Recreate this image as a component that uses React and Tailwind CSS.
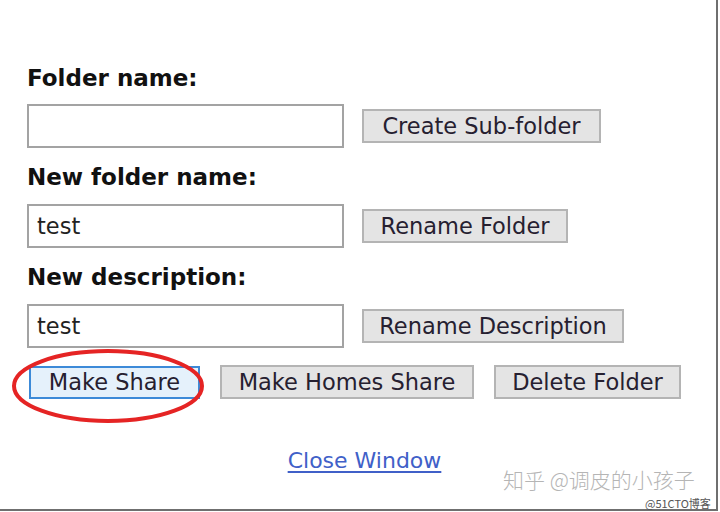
import React from "react";

const font = { fontFamily: '"DejaVu Sans", Verdana, sans-serif' };

function Btn({ children, className = "" }) {
  return (
    <div
      className={
        "flex h-[34px] items-center justify-center border-2 border-[#b4b4b4] bg-[#e4e4e4] pt-[1px] text-[22.5px] leading-none text-[#262030] " +
        className
      }
    >
      {children}
    </div>
  );
}

function Field({ value }) {
  return (
    <div className="flex h-[44px] w-[317px] items-center border-2 border-[#a3a3a3] bg-white pl-[8px] pt-[1px] text-[22.5px] text-[#222]">
      {value}
    </div>
  );
}

function Label({ children, className = "" }) {
  return (
    <div className={"h-[28px] whitespace-nowrap text-[23px] font-bold leading-[28px] text-[#111] " + className}>
      {children}
    </div>
  );
}

export default function App() {
  return (
    <div className="h-[512px] w-[720px] bg-white" style={font}>
      <div className="relative h-[511px] w-[718px] border-b-2 border-r-2 border-[#6f6f6f]">
        <div className="flex flex-col pl-[27px] pt-[64px]">
          <Label>Folder name:</Label>
          <div className="mt-[12px] flex items-center">
            <Field value="" />
            <Btn className="ml-[18px] w-[239px]">Create Sub-folder</Btn>
          </div>
          <Label className="mt-[15px]">New folder name:</Label>
          <div className="mt-[13px] flex items-center">
            <Field value="test" />
            <Btn className="ml-[18px] w-[206px]">Rename Folder</Btn>
          </div>
          <Label className="mt-[15px]">New description:</Label>
          <div className="mt-[13px] flex items-center">
            <Field value="test" />
            <Btn className="ml-[18px] w-[262px]">Rename Description</Btn>
          </div>
          <div className="mt-[17px] flex items-center pl-[2px]">
            <div className="flex h-[33px] w-[171px] items-center justify-center border-2 border-[#3c8ad8] bg-[#e5f1fb] pt-[1px] text-[22.5px] leading-none text-[#262030]">
              Make Share
            </div>
            <Btn className="ml-[20px] w-[254px]">Make Homes Share</Btn>
            <Btn className="ml-[20px] w-[187px]">Delete Folder</Btn>
          </div>
          <div className="mt-[49px] flex justify-center pr-[14px]">
            <span className="text-[22px] leading-[26px] text-[#4060c8] underline decoration-[#4060c8] underline-offset-[3px]">
              Close Window
            </span>
          </div>
        </div>

        <svg className="absolute left-[10px] top-[346px]" width="200" height="80" viewBox="0 0 200 80">
          <ellipse cx="98" cy="40" rx="94" ry="35" fill="none" stroke="#e52424" strokeWidth="4" />
        </svg>

        <div
          className="absolute left-[503px] top-[468px] whitespace-nowrap text-[21px] leading-[22px] text-[#b5b5b5]"
          style={{ fontFamily: '"Noto Sans CJK SC", "DejaVu Sans", sans-serif', fontWeight: 300 }}
        >
          知乎 @调皮的小孩子
        </div>
        <div
          className="absolute left-[645px] top-[497px] whitespace-nowrap text-[11px] leading-[12px] text-[#555]"
          style={{ fontFamily: '"Noto Sans CJK SC", "DejaVu Sans", sans-serif' }}
        >
          @51CTO博客
        </div>
      </div>
    </div>
  );
}
